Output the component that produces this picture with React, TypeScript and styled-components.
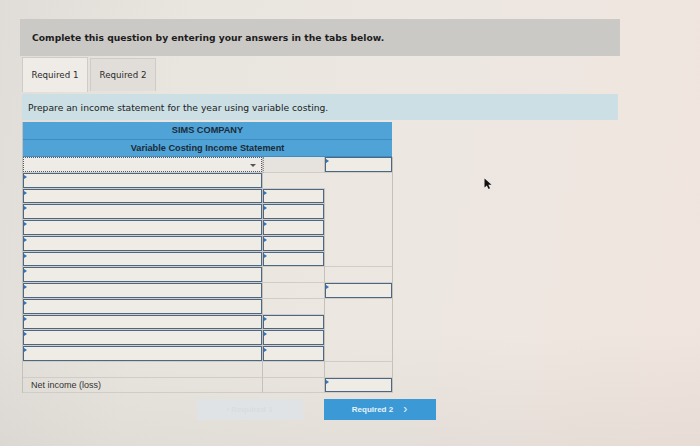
import React from "react";
import styled, { createGlobalStyle } from "styled-components";

const Global = createGlobalStyle`
  html, body { margin: 0; padding: 0; }
  body {
    width: 700px;
    height: 446px;
    overflow: hidden;
    font-family: "DejaVu Sans", Verdana, sans-serif;
    background: linear-gradient(100deg, #e0ddd8 0%, #e9e5df 25%, #ece7e1 55%, #efe6e0 80%, #f0e4de 100%);
  }
`;

const Page = styled.div`
  position: relative;
  width: 700px;
  height: 446px;
  box-sizing: border-box;
  padding: 19px 0 0 20px;
  background: linear-gradient(180deg, rgba(0,0,0,0) 75%, rgba(90,85,80,0.06) 100%);
`;

const Panel = styled.div`
  width: 600px;
  display: flex;
  flex-direction: column;
`;

const HeaderBox = styled.div`
  height: 37px;
  background: #cbc9c5;
  display: flex;
  align-items: center;
  padding-left: 12px;
  font-weight: bold;
  font-size: 9.2px;
  color: #1d1d1d;
`;

const Tabs = styled.div`
  display: flex;
  align-items: center;
  gap: 2px;
  margin: 1px 0 0 2px;
  height: 35px;
`;

const Tab = styled.div<{ $active?: boolean }>`
  box-sizing: border-box;
  width: 66px;
  height: ${(p) => (p.$active ? "35px" : "33px")};
  display: flex;
  align-items: center;
  justify-content: center;
  font-size: 8.7px;
  color: #2a2a2a;
  background: ${(p) => (p.$active ? "#efebe6" : "#e1ded9")};
  border: 1px solid #cfccc7;
  border-bottom: none;
`;

const Instruction = styled.div`
  margin: 2px 2px 0 2px;
  height: 26px;
  background: #cbdfe4;
  display: flex;
  align-items: center;
  padding-left: 6px;
  font-size: 9.2px;
  color: #222;
`;

const Table = styled.div`
  margin: 2px 0 0 2px;
  width: 370px;
  box-sizing: border-box;
  border-left: 1px solid #c4c1bc;
  font-family: "Liberation Sans", Arial, sans-serif;
`;

const TitleRow = styled.div`
  height: 16.5px;
  background: #4fa3d7;
  border-bottom: 1px solid #3f8dc0;
  display: flex;
  align-items: center;
  justify-content: center;
  font-size: 9.2px;
  font-weight: bold;
  color: #1c2b38;
`;

const Row = styled.div`
  display: grid;
  grid-template-columns: 240px 62px 68px;
  height: 15.75px;
`;

const Cell = styled.div<{ $open?: boolean; $merge?: boolean; $dotted?: boolean }>`
  position: relative;
  box-sizing: border-box;
  border-right: ${(p) => (p.$merge ? "none" : "1px solid #c4c1bc")};
  border-bottom: ${(p) => (p.$open ? "none" : "1px solid #d0cdc8")};
  border-left: ${(p) => (p.$dotted ? "1px dotted #8a8a8a" : "none")};
  background: ${(p) => (p.$dotted ? "#e6e3de" : "transparent")};
  display: flex;
  align-items: center;
`;

const Input = styled.div`
  position: absolute;
  inset: 0;
  box-sizing: border-box;
  border: 1px solid #4d6682;
  background: #efebe5;
  &::before {
    content: "";
    position: absolute;
    left: 0;
    top: 1px;
    border-left: 3px solid #2f74c0;
    border-top: 2px solid transparent;
    border-bottom: 2px solid transparent;
  }
`;

const Dropdown = styled.div`
  position: absolute;
  inset: 0;
  box-sizing: border-box;
  border: 1px dotted #5a5a5a;
  background: #efebe6;
  &::after {
    content: "";
    position: absolute;
    right: 5px;
    top: 6px;
    border-top: 3px solid #555;
    border-left: 3px solid transparent;
    border-right: 3px solid transparent;
  }
`;

const Label = styled.span`
  padding-left: 8px;
  font-size: 9px;
  color: #333;
`;

const Nav = styled.div`
  margin-top: 6px;
  display: flex;
  justify-content: center;
  gap: 21px;
  padding-right: 8px;
`;

const NavButton = styled.div<{ $disabled?: boolean }>`
  height: 21px;
  width: ${(p) => (p.$disabled ? "106px" : "112px")};
  background: ${(p) => (p.$disabled ? "#dfe3e5" : "#3b9ad5")};
  color: ${(p) => (p.$disabled ? "#d8dde0" : "#e8f2fa")};
  display: flex;
  align-items: center;
  justify-content: center;
  gap: 10px;
  font-family: "Liberation Sans", Arial, sans-serif;
  font-size: 8px;
  font-weight: bold;
`;

const Chevron = styled.span`
  font-size: 12px;
  font-weight: normal;
  line-height: 1;
  margin-top: -1px;
`;

const Cursor = styled.svg`
  position: absolute;
  left: 484px;
  top: 178px;
`;

type Kind = "input" | "blank" | "dotted" | "dropdown" | "none" | "text";
type Spec = { c1: Kind; c2: Kind; c3: Kind; text?: string; o2?: boolean; o3?: boolean; m2?: boolean };

const rows: Spec[] = [
  { c1: "dropdown", c2: "dotted", c3: "input" },
  { c1: "input", c2: "blank", c3: "blank", m2: true, o3: true },
  { c1: "input", c2: "input", c3: "blank", o3: true },
  { c1: "input", c2: "input", c3: "blank", o3: true },
  { c1: "input", c2: "input", c3: "blank", o3: true },
  { c1: "input", c2: "input", c3: "blank", o3: true },
  { c1: "input", c2: "input", c3: "blank" },
  { c1: "input", c2: "blank", c3: "blank" },
  { c1: "input", c2: "blank", c3: "input" },
  { c1: "input", c2: "blank", c3: "blank", o3: true },
  { c1: "input", c2: "input", c3: "blank", o3: true },
  { c1: "input", c2: "input", c3: "blank", o3: true },
  { c1: "input", c2: "input", c3: "blank" },
  { c1: "none", c2: "blank", c3: "blank" },
  { c1: "text", c2: "blank", c3: "input", text: "Net income (loss)" },
];

const content = (k: Kind, text?: string) => {
  if (k === "input") return <Input />;
  if (k === "dropdown") return <Dropdown />;
  if (k === "text") return <Label>{text}</Label>;
  return null;
};

export default function App() {
  return (
    <>
      <Global />
      <Page>
        <Panel>
          <HeaderBox>Complete this question by entering your answers in the tabs below.</HeaderBox>
          <Tabs>
            <Tab $active>Required 1</Tab>
            <Tab>Required 2</Tab>
          </Tabs>
          <Instruction>Prepare an income statement for the year using variable costing.</Instruction>
          <Table>
            <TitleRow>SIMS COMPANY</TitleRow>
            <TitleRow>Variable Costing Income Statement</TitleRow>
            {rows.map((r, i) => (
              <Row key={i}>
                <Cell>{content(r.c1, r.text)}</Cell>
                <Cell $dotted={r.c2 === "dotted"} $merge={r.m2} $open={r.o2}>
                  {content(r.c2)}
                </Cell>
                <Cell $open={r.o3}>{content(r.c3)}</Cell>
              </Row>
            ))}
          </Table>
          <Nav>
            <NavButton $disabled>‹ Required 1</NavButton>
            <NavButton>
              <span>Required 2</span>
              <Chevron>›</Chevron>
            </NavButton>
          </Nav>
        </Panel>
        <Cursor width="9" height="12" viewBox="0 0 9 12">
          <path d="M0.5 0.5 L0.5 9.5 L2.8 7.4 L4.6 11 L6 10.3 L4.3 6.8 L7.5 6.8 Z" fill="#111" />
        </Cursor>
      </Page>
    </>
  );
}
